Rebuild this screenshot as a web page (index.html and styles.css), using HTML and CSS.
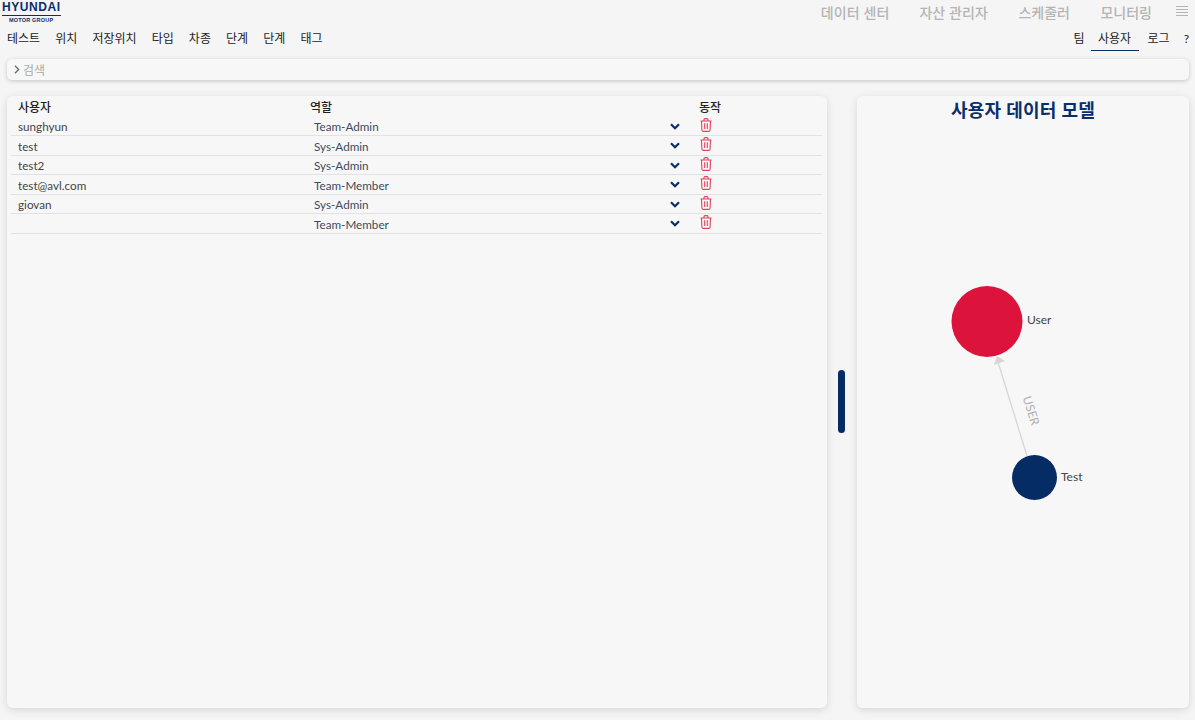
FILE: index.html
```html
<!DOCTYPE html>
<html lang="ko">
<head>
    <meta charset="UTF-8">
    <meta name="viewport" content="width=device-width, initial-scale=1.0">
    <title>사용자</title>
    <link rel="stylesheet" href="styles.css">
</head>
<body>

    <header class="top-bar">
        <div class="logo">
            <div class="logo-name">HYUNDAI</div>
            <div class="logo-sub">MOTOR GROUP</div>
        </div>
        <nav class="main-nav">
            <a>데이터 센터</a>
            <a>자산 관리자</a>
            <a>스케줄러</a>
            <a>모니터링</a>
            <svg class="menu-icon" width="12" height="10" viewBox="0 0 12 10">
                <path d="M0 .5h12M0 3.5h12M0 6.5h12M0 9.5h12" stroke="#b4b4b4" fill="none"/>
            </svg>
        </nav>
    </header>

    <div class="sub-bar">
        <div class="filter-tabs">
            <a>테스트</a>
            <a>위치</a>
            <a>저장위치</a>
            <a>타입</a>
            <a>차종</a>
            <a>단계</a>
            <a>단계</a>
            <a>태그</a>
        </div>
        <div class="page-tabs">
            <a>팀</a>
            <a class="active">사용자</a>
            <a>로그</a>
            <a>?</a>
        </div>
    </div>

    <div class="search-bar">
        <svg width="6" height="9" viewBox="0 0 6 9">
            <path d="M1 .8l3.6 3.7L1 8.2" stroke="#5f6b7a" stroke-width="1.3" fill="none"/>
        </svg>
        <span>검색</span>
    </div>

    <main class="content">
        <section class="card user-card">
            <table class="user-table">
                <thead>
                    <tr>
                        <th class="col-user">사용자</th>
                        <th class="col-role">역할</th>
                        <th class="col-action">동작</th>
                    </tr>
                </thead>
                <tbody>
                    <tr>
                        <td>sunghyun</td>
                        <td class="role"><div class="role-select"><span>Team-Admin</span><svg class="chevron" width="10" height="7" viewBox="0 0 10 7"><path d="M1 1.2l4 4 4-4" stroke="#0a2d6b" stroke-width="2.2" fill="none"/></svg></div></td>
                        <td class="action"><svg class="trash" width="12" height="14" viewBox="0 0 12 14"><path d="M.5 3h11M4 3V1.6q0-1 1-1h2q1 0 1 1V3M1.5 3l.4 9q.1 1.4 1.5 1.4h5.2q1.4 0 1.5-1.4l.4-9M4.7 5.3v5.8M7.3 5.3v5.8" stroke="#e2415f" stroke-width="1.1" fill="none"/></svg></td>
                    </tr>
                    <tr>
                        <td>test</td>
                        <td class="role"><div class="role-select"><span>Sys-Admin</span><svg class="chevron" width="10" height="7" viewBox="0 0 10 7"><path d="M1 1.2l4 4 4-4" stroke="#0a2d6b" stroke-width="2.2" fill="none"/></svg></div></td>
                        <td class="action"><svg class="trash" width="12" height="14" viewBox="0 0 12 14"><path d="M.5 3h11M4 3V1.6q0-1 1-1h2q1 0 1 1V3M1.5 3l.4 9q.1 1.4 1.5 1.4h5.2q1.4 0 1.5-1.4l.4-9M4.7 5.3v5.8M7.3 5.3v5.8" stroke="#e2415f" stroke-width="1.1" fill="none"/></svg></td>
                    </tr>
                    <tr>
                        <td>test2</td>
                        <td class="role"><div class="role-select"><span>Sys-Admin</span><svg class="chevron" width="10" height="7" viewBox="0 0 10 7"><path d="M1 1.2l4 4 4-4" stroke="#0a2d6b" stroke-width="2.2" fill="none"/></svg></div></td>
                        <td class="action"><svg class="trash" width="12" height="14" viewBox="0 0 12 14"><path d="M.5 3h11M4 3V1.6q0-1 1-1h2q1 0 1 1V3M1.5 3l.4 9q.1 1.4 1.5 1.4h5.2q1.4 0 1.5-1.4l.4-9M4.7 5.3v5.8M7.3 5.3v5.8" stroke="#e2415f" stroke-width="1.1" fill="none"/></svg></td>
                    </tr>
                    <tr>
                        <td>test@avl.com</td>
                        <td class="role"><div class="role-select"><span>Team-Member</span><svg class="chevron" width="10" height="7" viewBox="0 0 10 7"><path d="M1 1.2l4 4 4-4" stroke="#0a2d6b" stroke-width="2.2" fill="none"/></svg></div></td>
                        <td class="action"><svg class="trash" width="12" height="14" viewBox="0 0 12 14"><path d="M.5 3h11M4 3V1.6q0-1 1-1h2q1 0 1 1V3M1.5 3l.4 9q.1 1.4 1.5 1.4h5.2q1.4 0 1.5-1.4l.4-9M4.7 5.3v5.8M7.3 5.3v5.8" stroke="#e2415f" stroke-width="1.1" fill="none"/></svg></td>
                    </tr>
                    <tr>
                        <td>giovan</td>
                        <td class="role"><div class="role-select"><span>Sys-Admin</span><svg class="chevron" width="10" height="7" viewBox="0 0 10 7"><path d="M1 1.2l4 4 4-4" stroke="#0a2d6b" stroke-width="2.2" fill="none"/></svg></div></td>
                        <td class="action"><svg class="trash" width="12" height="14" viewBox="0 0 12 14"><path d="M.5 3h11M4 3V1.6q0-1 1-1h2q1 0 1 1V3M1.5 3l.4 9q.1 1.4 1.5 1.4h5.2q1.4 0 1.5-1.4l.4-9M4.7 5.3v5.8M7.3 5.3v5.8" stroke="#e2415f" stroke-width="1.1" fill="none"/></svg></td>
                    </tr>
                    <tr>
                        <td></td>
                        <td class="role"><div class="role-select"><span>Team-Member</span><svg class="chevron" width="10" height="7" viewBox="0 0 10 7"><path d="M1 1.2l4 4 4-4" stroke="#0a2d6b" stroke-width="2.2" fill="none"/></svg></div></td>
                        <td class="action"><svg class="trash" width="12" height="14" viewBox="0 0 12 14"><path d="M.5 3h11M4 3V1.6q0-1 1-1h2q1 0 1 1V3M1.5 3l.4 9q.1 1.4 1.5 1.4h5.2q1.4 0 1.5-1.4l.4-9M4.7 5.3v5.8M7.3 5.3v5.8" stroke="#e2415f" stroke-width="1.1" fill="none"/></svg></td>
                    </tr>
                </tbody>
            </table>
        </section>

        <div class="splitter"><div class="splitter-handle"></div></div>

        <section class="card model-card">
            <h2>사용자 데이터 모델</h2>
            <svg class="graph" width="332" height="612" viewBox="857 96 332 612">
                <line x1="1027" y1="456" x2="998" y2="362" stroke="#d6d6d6" stroke-width="1.3"/>
                <polygon points="997,356 1005,361 994,365" fill="#d6d6d6"/>
                <text class="edge-label" transform="translate(1027,412) rotate(72)" text-anchor="middle">USER</text>
                <circle cx="987" cy="321.500" r="35.500" fill="#dc143c"/>
                <circle cx="1034.500" cy="477.500" r="22.500" fill="#052c65"/>
                <text class="node-label" x="1027" y="324">User</text>
                <text class="node-label" x="1061" y="481">Test</text>
            </svg>
        </section>
    </main>

</body>
</html>
```

FILE: styles.css
```css
* {
    box-sizing: border-box;
}

html, body {
    height: 100%;
}

body {
    margin: 0;
    background-color: #f5f5f5;
    color: #333;
    font-family: Lato, "Noto Sans CJK KR", sans-serif;
    font-size: 12px;
    height: 720px;
    overflow: hidden;
    display: flex;
    flex-direction: column;
}

.top-bar {
    height: 26px;
    display: flex;
    justify-content: space-between;
    align-items: flex-start;
    padding: 0 7px 0 2px;
}

.logo {
    width: 59px;
    padding-top: 1px;
}

.logo-name {
    color: #0a2d6b;
    font-family: "Liberation Sans", sans-serif;
    font-size: 12px;
    font-weight: 700;
    line-height: 12px;
    letter-spacing: 0.55px;
    white-space: nowrap;
    border-bottom: 1px solid #0a2d6b;
    height: 15px;
}

.logo-sub {
    color: #0a2d6b;
    font-family: "Liberation Sans", sans-serif;
    font-size: 5.5px;
    font-weight: 700;
    line-height: 6px;
    margin-top: 1px;
    padding-left: 7px;
    letter-spacing: 0.2px;
    white-space: nowrap;
}

.main-nav {
    display: flex;
    align-items: center;
    height: 26px;
    color: #b4b4b4;
    font-size: 14px;
    font-weight: 500;
    padding-bottom: 2px;
}

.main-nav a {
    margin-right: 30.5px;
}

.main-nav a:nth-child(1) {
    margin-right: 30px;
    letter-spacing: 0.1px;
}

.main-nav a:nth-child(2) {
    letter-spacing: 0.1px;
}

.main-nav a:nth-child(4) {
    margin-right: 24px;
}

.menu-icon {
    margin-bottom: 3px;
}

.sub-bar {
    height: 25px;
    display: flex;
    justify-content: space-between;
    align-items: center;
    padding: 0 6px 0 7px;
    color: #222;
}

.filter-tabs {
    display: flex;
    gap: 15.1px;
    padding-bottom: 2px;
}

.page-tabs {
    display: flex;
    height: 24px;
    margin-bottom: -1px;
}

.page-tabs a {
    padding: 0 5px 0 9px;
    line-height: 23px;
}

.page-tabs a:first-child {
    padding: 0 6px 0 0;
}

.page-tabs a:last-child {
    padding: 0 0 0 9px;
}

.page-tabs .active {
    border-bottom: 1px solid #0a2d6b;
    width: 48px;
    padding: 0;
    text-align: center;
}

.search-bar {
    margin: 8px 6px 0 7px;
    height: 20.5px;
    display: flex;
    align-items: center;
    gap: 3px;
    padding-left: 7px;
    background-color: #f7f7f7;
    border-radius: 5px;
    box-shadow: 0 1px 4px rgba(0, 0, 0, 0.2);
    color: #aaa;
}

.content {
    flex: 1;
    display: flex;
    margin: 16.5px 6px 12px 7px;
    min-height: 0;
}

.card {
    background-color: #f7f7f7;
    border-radius: 6px;
    box-shadow: 0 2px 8px rgba(0, 0, 0, 0.13);
}

.user-card {
    width: 820px;
    padding: 0 4px;
}

.splitter {
    width: 30px;
    display: flex;
    align-items: center;
    justify-content: center;
    padding: 0 1px 1px 0;
}

.splitter-handle {
    width: 7.500px;
    height: 63px;
    border-radius: 4px;
    background-color: #052c65;
}

.model-card {
    position: relative;
    width: 332px;
}

.model-card h2 {
    margin: 0;
    padding-top: 2px;
    color: #0a2d6b;
    font-size: 18px;
    font-weight: 700;
    letter-spacing: 0.3px;
    line-height: 25px;
    text-align: center;
}

.graph {
    position: absolute;
    left: 0;
    top: 0;
}

.edge-label {
    fill: #b0b0b0;
    font-size: 12px;
}

.node-label {
    fill: #444;
    font-size: 12px;
}

.user-table {
    width: 811px;
    border-collapse: collapse;
    table-layout: fixed;
}

.user-table th {
    height: 20px;
    padding: 4px 0 0;
    font-weight: 500;
    text-align: left;
    color: #222;
    line-height: 16px;
}

.col-user {
    width: 299px;
    padding-left: 7px !important;
}

.col-role {
    width: 389px;
}

.user-table td {
    height: 19.5px;
    padding: 1px 0 0 7px;
    border-bottom: 1px solid #e2e2e6;
    color: #444;
    font-size: 11.7px;
    line-height: 16px;
}

.user-table td.role {
    padding-left: 4px;
    color: #3c4a60;
}

.user-table td.action {
    padding: 1px 0 0 1px;
}

.role-select {
    display: flex;
    justify-content: space-between;
    align-items: center;
    padding-right: 19px;
}

.trash {
    display: block;
    margin-bottom: 3px;
}
```
